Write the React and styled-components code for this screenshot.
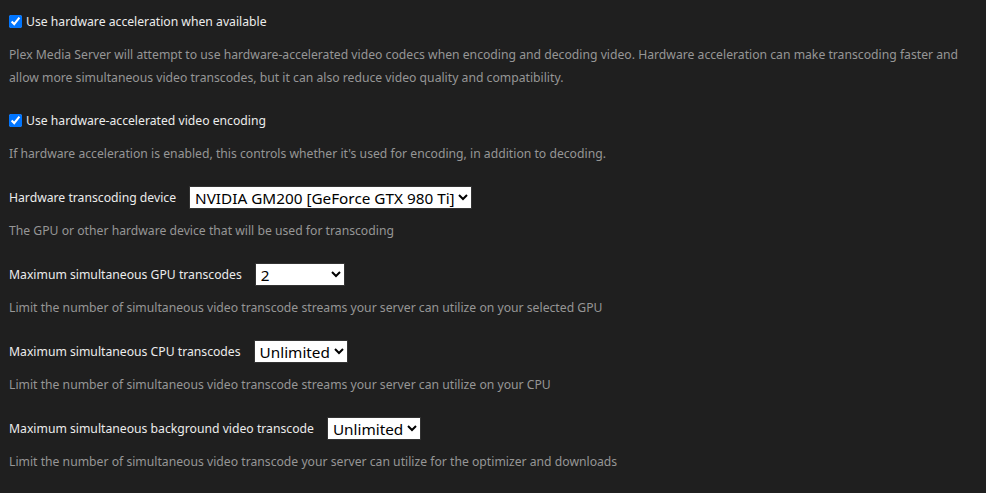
import React from 'react';
import styled, { createGlobalStyle } from 'styled-components';

const GlobalStyle = createGlobalStyle`
  html, body {
    margin: 0;
    background: #1f1f1f;
  }
  body {
    font-family: "Noto Sans", "Open Sans", sans-serif;
  }
`;

const Page = styled.div`
  padding: 9px 9px 0 9px;
  min-height: 493px;
  box-sizing: border-box;
  background: #1f1f1f;
`;

const Group = styled.div`
  margin-bottom: 20px;

  &:first-child {
    margin-bottom: 19px;
  }
`;

const Header = styled.div`
  display: flex;
  align-items: center;
  height: 24px;
  gap: ${p => (p.$check ? '4px' : '13px')};
`;

const Check = styled.input`
  width: 13px;
  height: 13px;
  margin: 0;
  accent-color: #0075ff;
`;

const Label = styled.label`
  color: #ececec;
  font-size: 12.2px;
  white-space: nowrap;
`;

const Select = styled.select`
  height: 23px;
  font-family: "Noto Sans", "Open Sans", sans-serif;
  font-size: 15.3px;
  color: #000;
  background: #fff;
  border: 1px solid #333;
  border-radius: 0;
  padding: 0 0 0 1px;
  width: ${p => p.$width || 'auto'};
`;

const Help = styled.p`
  margin: 10px 0 0 0;
  color: #969696;
  font-size: 12.2px;
  line-height: 23px;
`;

const CheckSetting = ({ label, help }) => (
  <Group>
    <Header $check>
      <Check type="checkbox" defaultChecked />
      <Label>{label}</Label>
    </Header>
    <Help>{help}</Help>
  </Group>
);

const SelectSetting = ({ label, options, width, help }) => (
  <Group>
    <Header>
      <Label>{label}</Label>
      <Select $width={width} defaultValue={options[0]}>
        {options.map(o => <option key={o}>{o}</option>)}
      </Select>
    </Header>
    <Help>{help}</Help>
  </Group>
);

const App = () => (
  <Page>
    <GlobalStyle />
    <CheckSetting
      label="Use hardware acceleration when available"
      help="Plex Media Server will attempt to use hardware-accelerated video codecs when encoding and decoding video. Hardware acceleration can make transcoding faster and allow more simultaneous video transcodes, but it can also reduce video quality and compatibility."
    />
    <CheckSetting
      label="Use hardware-accelerated video encoding"
      help="If hardware acceleration is enabled, this controls whether it's used for encoding, in addition to decoding."
    />
    <SelectSetting
      label="Hardware transcoding device"
      options={['NVIDIA GM200 [GeForce GTX 980 Ti]', 'Auto']}
      help="The GPU or other hardware device that will be used for transcoding"
    />
    <SelectSetting
      label="Maximum simultaneous GPU transcodes"
      options={['2', '1', '3', '4', 'Unlimited']}
      width="90px"
      help="Limit the number of simultaneous video transcode streams your server can utilize on your selected GPU"
    />
    <SelectSetting
      label="Maximum simultaneous CPU transcodes"
      options={['Unlimited', '1', '2', '3', '4']}
      help="Limit the number of simultaneous video transcode streams your server can utilize on your CPU"
    />
    <SelectSetting
      label="Maximum simultaneous background video transcode"
      options={['Unlimited', '1', '2', '3', '4']}
      help="Limit the number of simultaneous video transcode your server can utilize for the optimizer and downloads"
    />
  </Page>
);

export default App;
